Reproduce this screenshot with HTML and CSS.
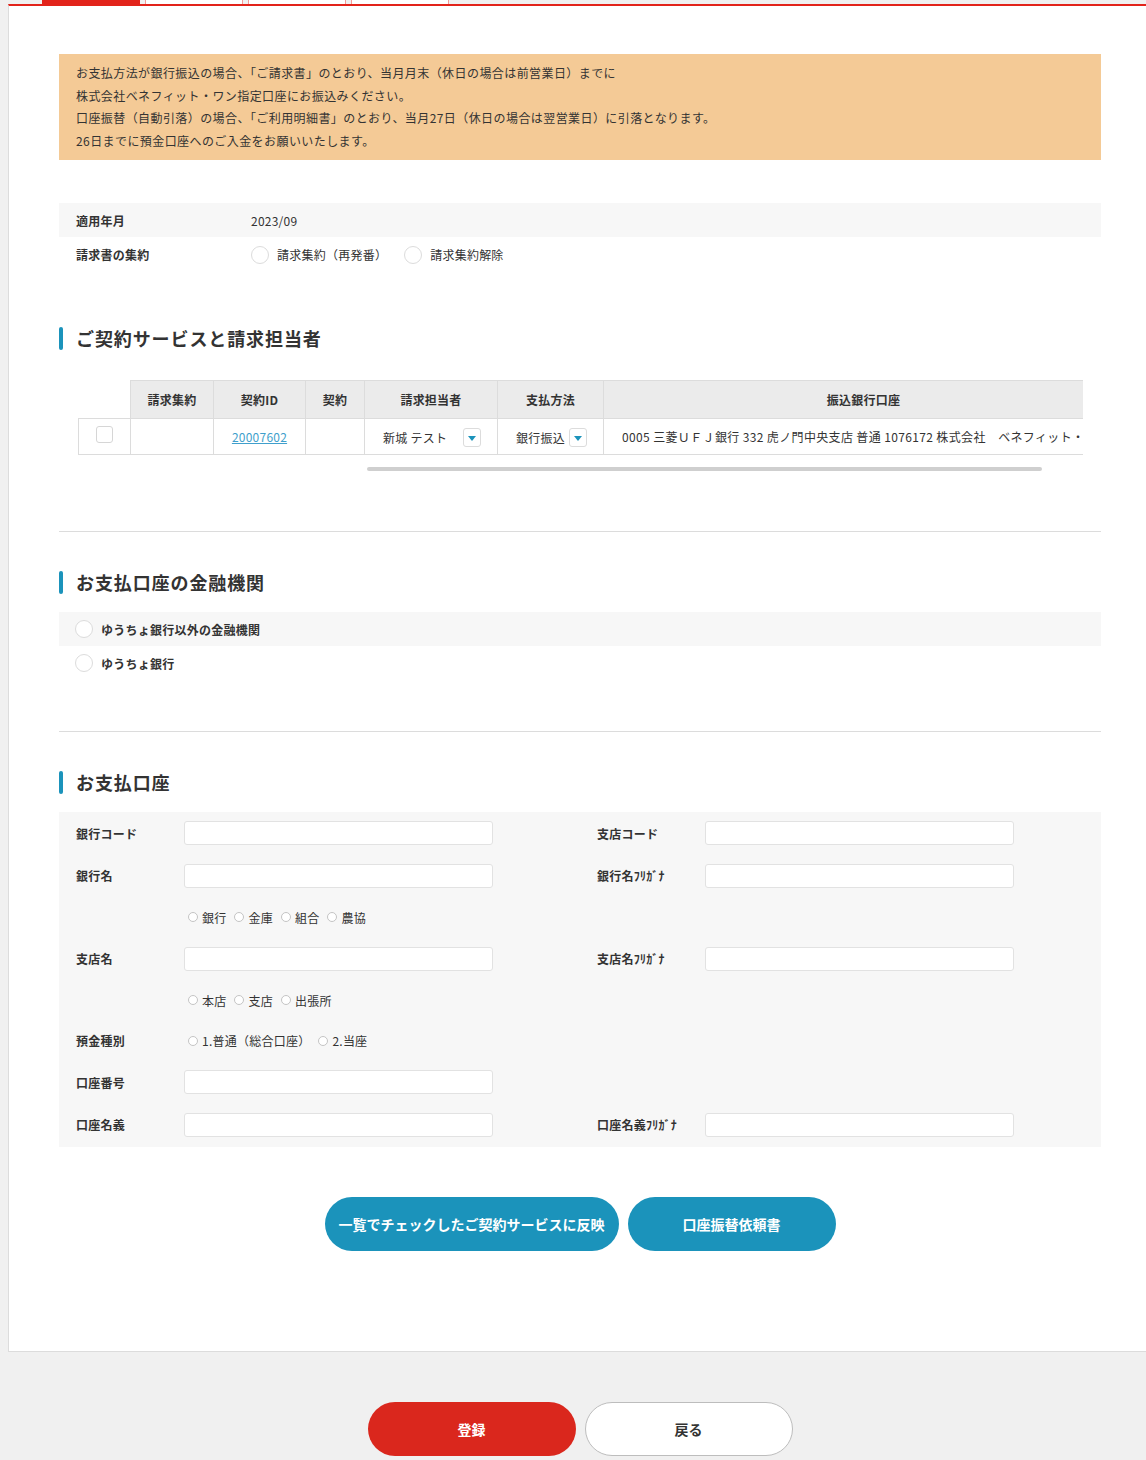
FILE: index.html
```html
<!DOCTYPE html>
<html lang="ja">
<head>
<meta charset="utf-8">
<title>お支払口座</title>
<link rel="stylesheet" href="styles.css">
</head>
<body>
<div class="tabs">
  <span class="tab tab-active"></span>
  <span class="tab"></span>
  <span class="tab"></span>
  <span class="tab"></span>
</div>
<div class="card">
  <div class="notice">
    <p>お支払方法が銀行振込の場合、「ご請求書」のとおり、当月月末（休日の場合は前営業日）までに</p>
    <p>株式会社ベネフィット・ワン指定口座にお振込みください。</p>
    <p>口座振替（自動引落）の場合、「ご利用明細書」のとおり、当月27日（休日の場合は翌営業日）に引落となります。</p>
    <p>26日までに預金口座へのご入金をお願いいたします。</p>
  </div>

  <div class="info">
    <div class="info-row shaded">
      <div class="info-label">適用年月</div>
      <div class="info-value">2023/09</div>
    </div>
    <div class="info-row tall">
      <div class="info-label">請求書の集約</div>
      <div class="info-value">
        <span class="radio-lg"><span class="circle-lg"></span>請求集約（再発番）</span>
        <span class="radio-lg"><span class="circle-lg"></span>請求集約解除</span>
      </div>
    </div>
  </div>

  <h2 class="heading heading-first">ご契約サービスと請求担当者</h2>
  <div class="table-wrap">
    <table class="tbl">
      <colgroup>
        <col class="c-check"><col class="c-agg"><col class="c-id"><col class="c-con"><col class="c-person"><col class="c-pay"><col class="c-bank">
      </colgroup>
      <thead>
        <tr>
          <th class="blank"></th>
          <th>請求集約</th>
          <th>契約ID</th>
          <th>契約</th>
          <th>請求担当者</th>
          <th>支払方法</th>
          <th>振込銀行口座</th>
        </tr>
      </thead>
      <tbody>
        <tr>
          <td><span class="checkbox"></span></td>
          <td></td>
          <td><a class="link" href="#">20007602</a></td>
          <td></td>
          <td class="left"><span class="select sel-person"><span>新城 テスト</span><span class="drop"></span></span></td>
          <td class="left"><span class="select sel-pay"><span>銀行振込</span><span class="drop"></span></span></td>
          <td class="left bank">0005 三菱ＵＦＪ銀行 332 虎ノ門中央支店 普通 1076172 株式会社　ベネフィット・</td>
        </tr>
      </tbody>
    </table>
  </div>
  <div class="hscroll"></div>

  <hr class="divider first-divider">

  <h2 class="heading">お支払口座の金融機関</h2>
  <div class="choices">
    <div class="choice shaded"><span class="circle-lg"></span>ゆうちょ銀行以外の金融機関</div>
    <div class="choice"><span class="circle-lg"></span>ゆうちょ銀行</div>
  </div>

  <hr class="divider second-divider">

  <h2 class="heading">お支払口座</h2>
  <div class="form">
    <div class="frow">
      <div class="field"><span class="flabel">銀行コード</span><input class="input" type="text"></div>
      <div class="field"><span class="flabel">支店コード</span><input class="input" type="text"></div>
    </div>
    <div class="frow">
      <div class="field"><span class="flabel">銀行名</span><input class="input" type="text"></div>
      <div class="field"><span class="flabel">銀行名ﾌﾘｶﾞﾅ</span><input class="input" type="text"></div>
    </div>
    <div class="frow sub">
      <div class="field"><span class="flabel"></span>
        <span class="radios">
          <span class="rsm"><span class="dot"></span>銀行</span>
          <span class="rsm"><span class="dot"></span>金庫</span>
          <span class="rsm"><span class="dot"></span>組合</span>
          <span class="rsm"><span class="dot"></span>農協</span>
        </span>
      </div>
    </div>
    <div class="frow">
      <div class="field"><span class="flabel">支店名</span><input class="input" type="text"></div>
      <div class="field"><span class="flabel">支店名ﾌﾘｶﾞﾅ</span><input class="input" type="text"></div>
    </div>
    <div class="frow sub">
      <div class="field"><span class="flabel"></span>
        <span class="radios">
          <span class="rsm"><span class="dot"></span>本店</span>
          <span class="rsm"><span class="dot"></span>支店</span>
          <span class="rsm"><span class="dot"></span>出張所</span>
        </span>
      </div>
    </div>
    <div class="frow sub">
      <div class="field"><span class="flabel">預金種別</span>
        <span class="radios">
          <span class="rsm"><span class="dot"></span>1.普通（総合口座）</span>
          <span class="rsm"><span class="dot"></span>2.当座</span>
        </span>
      </div>
    </div>
    <div class="frow">
      <div class="field"><span class="flabel">口座番号</span><input class="input" type="text"></div>
    </div>
    <div class="frow">
      <div class="field"><span class="flabel">口座名義</span><input class="input" type="text"></div>
      <div class="field"><span class="flabel">口座名義ﾌﾘｶﾞﾅ</span><input class="input" type="text"></div>
    </div>
  </div>

  <div class="actions">
    <button class="btn btn-blue" type="button">一覧でチェックしたご契約サービスに反映</button>
    <button class="btn btn-blue" type="button">口座振替依頼書</button>
  </div>
</div>

<div class="footer-actions">
  <button class="btn btn-red" type="button">登録</button>
  <button class="btn btn-white" type="button">戻る</button>
</div>
</body>
</html>
```

FILE: styles.css
```css
* { box-sizing: border-box; }

html, body { margin: 0; padding: 0; }

body {
  background: #f0f0f0;
  font-family: "Noto Sans CJK JP", "Noto Sans", sans-serif;
  font-size: 12px;
  color: #333;
  letter-spacing: 0.02em;
}

/* top tabs (scrolled off) */
.tabs {
  display: flex;
  gap: 5px;
  height: 4px;
  padding-left: 42px;
  overflow: hidden;
}
.tab {
  width: 98px;
  height: 4px;
  background: #fff;
  border: 1px solid #f29a96;
  border-top: 0;
  border-bottom: 0;
}
.tab-active {
  background: #e2231a;
  border-color: #e2231a;
}

/* main card */
.card {
  margin-left: 8px;
  background: #fff;
  border-left: 1px solid #dcdcdc;
  border-top: 2px solid #e2231a;
  border-bottom: 1px solid #dcdcdc;
  padding: 48px 45px 100px 50px;
}

.notice {
  background: #f4ca96;
  padding: 8px 17px;
  line-height: 22.5px;
  letter-spacing: 0.035em;
}
.notice p { margin: 0; }

.info { margin-top: 43px; }
.info-row {
  display: flex;
  align-items: center;
  height: 34px;
}
.info-row.tall { height: 35px; }
.shaded { background: #f7f7f7; }
.info-label {
  width: 192px;
  padding-left: 17px;
  font-weight: 700;
}
.info-value {
  display: flex;
  align-items: center;
}
.radio-lg {
  display: inline-flex;
  align-items: center;
  margin-right: 17px;
}
.circle-lg {
  display: inline-block;
  width: 18px;
  height: 18px;
  border: 1px solid #dcdcdc;
  border-radius: 50%;
  background: #fff;
  margin-right: 8px;
  flex: none;
}

/* headings */
.heading {
  display: flex;
  align-items: center;
  height: 24px;
  margin: 38px 0 18px;
  font-size: 18px;
  font-weight: 700;
  letter-spacing: 0.05em;
  color: #333;
}
.heading::before {
  content: "";
  width: 4px;
  height: 23px;
  background: #1b93bb;
  border-radius: 2px;
  margin-right: 13px;
}
.heading-first { margin-top: 54px; }

/* contract table */
.table-wrap {
  margin: 30px 18px 0 19px;
  overflow: hidden;
}
.tbl {
  border-collapse: collapse;
  table-layout: fixed;
  width: 1045px;
}
.c-check { width: 52px; }
.c-agg { width: 83px; }
.c-id { width: 92px; }
.c-con { width: 59px; }
.c-person { width: 133px; }
.c-pay { width: 106px; }
.c-bank { width: 520px; }

.tbl th {
  height: 38px;
  background: #ebebeb;
  border: 1px solid #dcdcdc;
  font-weight: 700;
  text-align: center;
  padding: 0;
}
.tbl th.blank {
  background: transparent;
  border: 0;
}
.tbl td {
  height: 36px;
  border: 1px solid #dcdcdc;
  text-align: center;
  padding: 0;
  white-space: nowrap;
  overflow: hidden;
}
.tbl td.left {
  text-align: left;
  padding-left: 18px;
}
.checkbox {
  display: block;
  width: 17px;
  height: 17px;
  margin: -4px auto 0;
  border: 1px solid #d6d6d6;
  border-radius: 3px;
  background: #fff;
}
.link {
  color: #3f9fcc;
  text-decoration: underline;
}
.select {
  display: inline-flex;
  align-items: center;
  justify-content: space-between;
  vertical-align: middle;
}
.sel-person { width: 98px; }
.sel-pay { width: 71px; }
.drop {
  position: relative;
  width: 18px;
  height: 19px;
  border: 1px solid #dcdcdc;
  border-radius: 3px;
  background: #fff;
}
.drop::after {
  content: "";
  position: absolute;
  left: 4px;
  top: 7px;
  border-left: 4px solid transparent;
  border-right: 4px solid transparent;
  border-top: 5px solid #1b93bb;
}
.bank { letter-spacing: 0.03em; }

.hscroll {
  margin: 12px 0 0 308px;
  width: 675px;
  height: 4px;
  background: #cfcfcf;
  border-radius: 2px;
}

.divider {
  border: 0;
  border-top: 1px solid #dcdcdc;
  margin: 60px 0 0;
  height: 0;
}
.second-divider { margin-top: 51px; }

/* financial institution choice */
.choice {
  display: flex;
  align-items: center;
  height: 34px;
  padding-left: 16px;
  font-weight: 700;
}

/* account form */
.form {
  background: #f7f7f7;
  padding: 9px 0 10px 17px;
  display: flex;
  flex-direction: column;
  gap: 18.5px;
}
.frow {
  display: flex;
  align-items: center;
  height: 24px;
}
.frow.sub { height: 22px; }
.field {
  display: flex;
  align-items: center;
  width: 521px;
  flex: none;
}
.flabel {
  width: 108px;
  flex: none;
  font-weight: 700;
}
.input {
  width: 309px;
  height: 24px;
  margin: 0;
  background: #fff;
  border: 1px solid #e2e2e2;
  border-radius: 3px;
  font: inherit;
}
.radios {
  display: flex;
  align-items: center;
  padding-left: 4px;
}
.rsm {
  display: inline-flex;
  align-items: center;
  margin-right: 8px;
}
.dot {
  width: 10px;
  height: 10px;
  border: 1px solid #c4c4c4;
  border-radius: 50%;
  background: #fff;
  margin-right: 4px;
}

/* buttons */
.actions {
  display: flex;
  justify-content: center;
  gap: 9px;
  margin-top: 50px;
}
.btn {
  height: 54px;
  min-width: 208px;
  padding: 0 14px;
  border-radius: 27px;
  border: 0;
  font-family: inherit;
  font-size: 14px;
  font-weight: 700;
  letter-spacing: 0;
  white-space: nowrap;
}
.btn-blue {
  background: #1b93bb;
  color: #fff;
}
.footer-actions {
  display: flex;
  justify-content: center;
  gap: 9px;
  width: 1042px;
  margin: 50px 0 0 59px;
  padding-bottom: 20px;
}
.btn-red {
  background: #da271d;
  color: #fff;
}
.btn-white {
  background: #fff;
  color: #333;
  border: 1px solid #bdbdbd;
}
```
